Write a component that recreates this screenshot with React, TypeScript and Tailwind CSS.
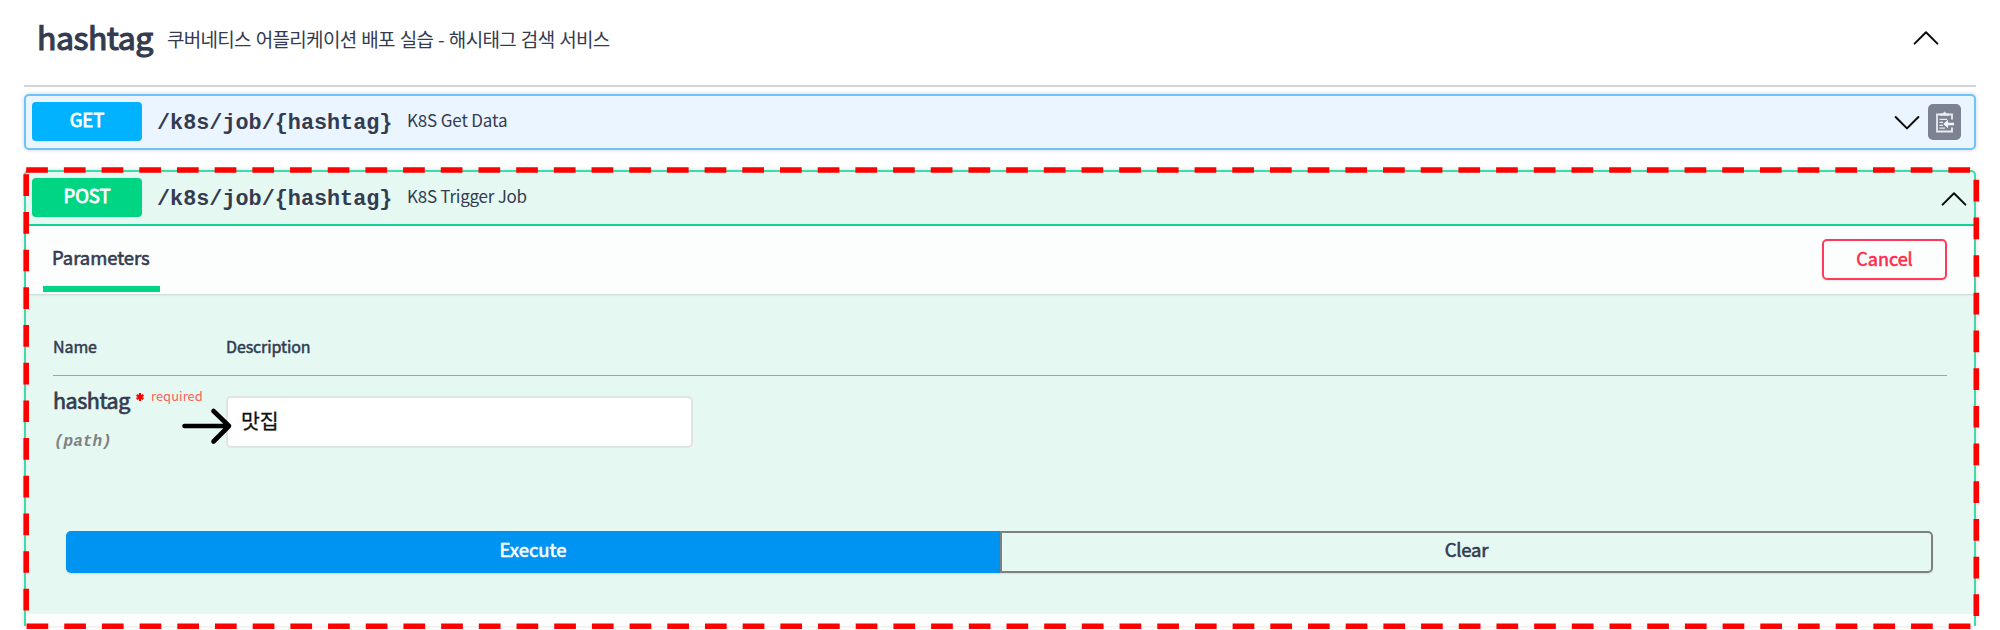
import React from "react";

function Chevron({ down = false }: { down?: boolean }) {
  return (
    <svg width="26" height="16" viewBox="0 0 26 16" fill="none" className="block shrink-0">
      <path
        d={down ? "M1.6 2 L13 13.4 L24.4 2" : "M1.6 13.6 L13 2.2 L24.4 13.6"}
        stroke="#0b0b0b"
        strokeWidth="2"
        strokeLinecap="round"
        strokeLinejoin="round"
      />
    </svg>
  );
}

function CopyIcon() {
  return (
    <svg width="20" height="22" viewBox="0 0 20 22" fill="none" className="block">
      <path d="M17 8.5V3.5H2V20.5H17V16.5" stroke="#e9ebf0" strokeWidth="1.8" />
      <path d="M5 4.8V2.6H7.6L9.5 0.6L11.4 2.6H14V4.8Z" fill="#e9ebf0" />
      <path d="M4.5 8.3H12M4.5 11.3H8M4.5 14.3H8M4.5 17.2H10" stroke="#e9ebf0" strokeWidth="1.2" />
      <path d="M8.3 13L13 8.8V11.7H19V14.3H13V17.2Z" fill="#f4f5f8" />
    </svg>
  );
}

function Method({ label, color }: { label: string; color: string }) {
  return (
    <div
      className={`h-[39px] w-[110px] shrink-0 rounded-[4px] pt-[4px] text-center text-[18.5px] leading-[27px] text-white [-webkit-text-stroke:0.8px_currentColor] ${color}`}
    >
      {label}
    </div>
  );
}

function Path() {
  return (
    <span className="ml-[15px] w-[250px] shrink-0 whitespace-nowrap pt-[9px] font-['Liberation_Mono',monospace] text-[21.8px] font-bold leading-[26px]">
      /k8s/job/&#123;hashtag&#125;
    </span>
  );
}

export default function App() {
  return (
    <div className="relative flex h-[630px] w-[2000px] flex-col overflow-hidden bg-white pl-[24px] pr-[24px] font-['Noto_Sans_CJK_KR',sans-serif] text-[#343b50]">
      <header className="flex h-[87px] shrink-0 border-b-[2px] border-[#d3d4d9] pl-[13px] pr-[37px]">
        <h1 className="w-[130px] whitespace-nowrap pt-[12px] text-[32px] leading-[48px] tracking-[-0.5px] [-webkit-text-stroke:1.2px_currentColor]">
          hashtag
        </h1>
        <p className="grow whitespace-nowrap pt-[24px] text-[19px] leading-[30px] tracking-[-0.7px] [word-spacing:1.3px]">
          쿠버네티스 어플리케이션 배포 실습 - 해시태그 검색 서비스
        </p>
        <div className="pt-[30px]">
          <Chevron />
        </div>
      </header>

      <section className="mt-[7px] flex h-[56px] shrink-0 rounded-[5px] border-2 border-[#6bc4fb] bg-[#ebf5ff] pl-[6px] pr-[13px] shadow-[0_0_4px_rgba(0,0,0,0.19)]">
        <div className="pt-[6px]">
          <Method label="GET" color="bg-[#00b2ff]" />
        </div>
        <div className="flex pt-[6px]">
          <Path />
          <span className="whitespace-nowrap pt-[5px] text-[17px] leading-[26px] tracking-[-0.15px]">K8S Get Data</span>
        </div>
        <div className="grow" />
        <div className="pt-[19px]">
          <Chevron down />
        </div>
        <div className="ml-[8px] mt-[8px] flex h-[36px] w-[33px] items-center justify-center rounded-[5px] bg-[#7d8293]">
          <CopyIcon />
        </div>
      </section>

      <section className="mt-[20px] flex h-[456px] shrink-0 flex-col rounded-t-[5px] border-x-2 border-t-2 border-[#3fdcab] bg-[#e5f9f2] shadow-[0_0_4px_rgba(0,0,0,0.15)]">
        <div className="flex h-[54px] shrink-0 border-b-2 border-[#10d596] pl-[6px] pr-[7px]">
          <div className="pt-[6px]">
            <Method label="POST" color="bg-[#00d584]" />
          </div>
          <div className="flex pt-[6px]">
            <Path />
            <span className="whitespace-nowrap pt-[5px] text-[17px] leading-[26px] tracking-[-0.25px]">K8S Trigger Job</span>
          </div>
          <div className="grow" />
          <div className="pt-[19px]">
            <Chevron />
          </div>
        </div>

        <div className="flex h-[68px] shrink-0 justify-between bg-[#fcfefd] pl-[17px] pr-[27px] shadow-[0_1px_2px_rgba(0,0,0,0.15)]">
          <div className="mt-[18px] h-[48px] w-[117px] border-b-[6px] border-[#00d584] pl-[9px] text-[18.5px] leading-[27px] tracking-[-0.05px] [-webkit-text-stroke:0.6px_currentColor]">
            Parameters
          </div>
          <button className="mt-[13px] h-[41px] w-[125px] rounded-[5px] border-2 border-[#ff3b5c] pb-[4px] text-[18px] leading-[28px] text-[#ff2d4e] shadow-[0_1px_2px_rgba(0,0,0,0.1)] [-webkit-text-stroke:0.6px_currentColor]">
            Cancel
          </button>
        </div>

        <div className="mx-[27px] flex h-[82px] shrink-0 items-end border-b border-[#93a7a4] pb-[16px] text-[16px] leading-[25px] tracking-[-0.1px] [-webkit-text-stroke:0.5px_currentColor]">
          <div className="w-[173px]">Name</div>
          <div>Description</div>
        </div>

        <div className="mx-[27px] flex h-[155px] shrink-0">
          <div className="w-[173px] shrink-0">
            <div className="flex pt-[8px]">
              <span className="w-[77px] text-[21.5px] leading-[32px] tracking-[-0.45px] [-webkit-text-stroke:0.7px_currentColor]">
                hashtag
              </span>
              <svg width="8" height="8" viewBox="0 0 8 8" className="ml-[6px] mt-[9px] shrink-0">
                <path d="M4 0V8M.6 2L7.4 6M7.4 2L.6 6" stroke="#f00" strokeWidth="2.2" />
              </svg>
              <span className="ml-[7px] text-[13px] leading-[23px] text-[#ff5c5c]">required</span>
            </div>
            <div className="pl-[1px] pt-[15px] font-['Liberation_Mono',monospace] text-[16px] font-bold italic leading-[22px] text-[#808080]">
              (path)
            </div>
          </div>
          <div className="mt-[20px] h-[52px] w-[467px] rounded-[5px] border-2 border-[#dfe5e3] bg-white pl-[13px] pt-[8px] text-[20.5px] leading-[28px] text-[#111] [-webkit-text-stroke:0.3px_currentColor]">
            맛집
          </div>
        </div>

        <div className="flex h-[83px] shrink-0 items-start pl-[40px] pr-[41px] text-[18.5px] leading-[28px] [-webkit-text-stroke:0.6px_currentColor]">
          <button className="h-[42px] w-[934px] rounded-l-[5px] bg-[#0094f2] pb-[7px] text-white shadow-[0_1px_2px_rgba(0,0,0,0.12)]">
            Execute
          </button>
          <button className="h-[42px] grow rounded-r-[5px] border-2 border-[#808080] pb-[6px] tracking-[-0.2px] shadow-[0_1px_2px_rgba(0,0,0,0.1)]">
            Clear
          </button>
        </div>
        <div className="grow bg-[#fcfefd]" />
      </section>

      <svg width="2000" height="630" viewBox="0 0 2000 630" fill="none" className="pointer-events-none absolute left-0 top-0">
        <path d="M26.2 170H1976.3V626.2H26.2Z" stroke="#f00" strokeWidth="5.6" strokeDasharray="21.7 15.99" />
        <path
          d="M184.5 426H229M213.5 411L229 426L213.5 441.5"
          stroke="#000"
          strokeWidth="4.6"
          strokeLinecap="round"
          strokeLinejoin="round"
        />
      </svg>
    </div>
  );
}
